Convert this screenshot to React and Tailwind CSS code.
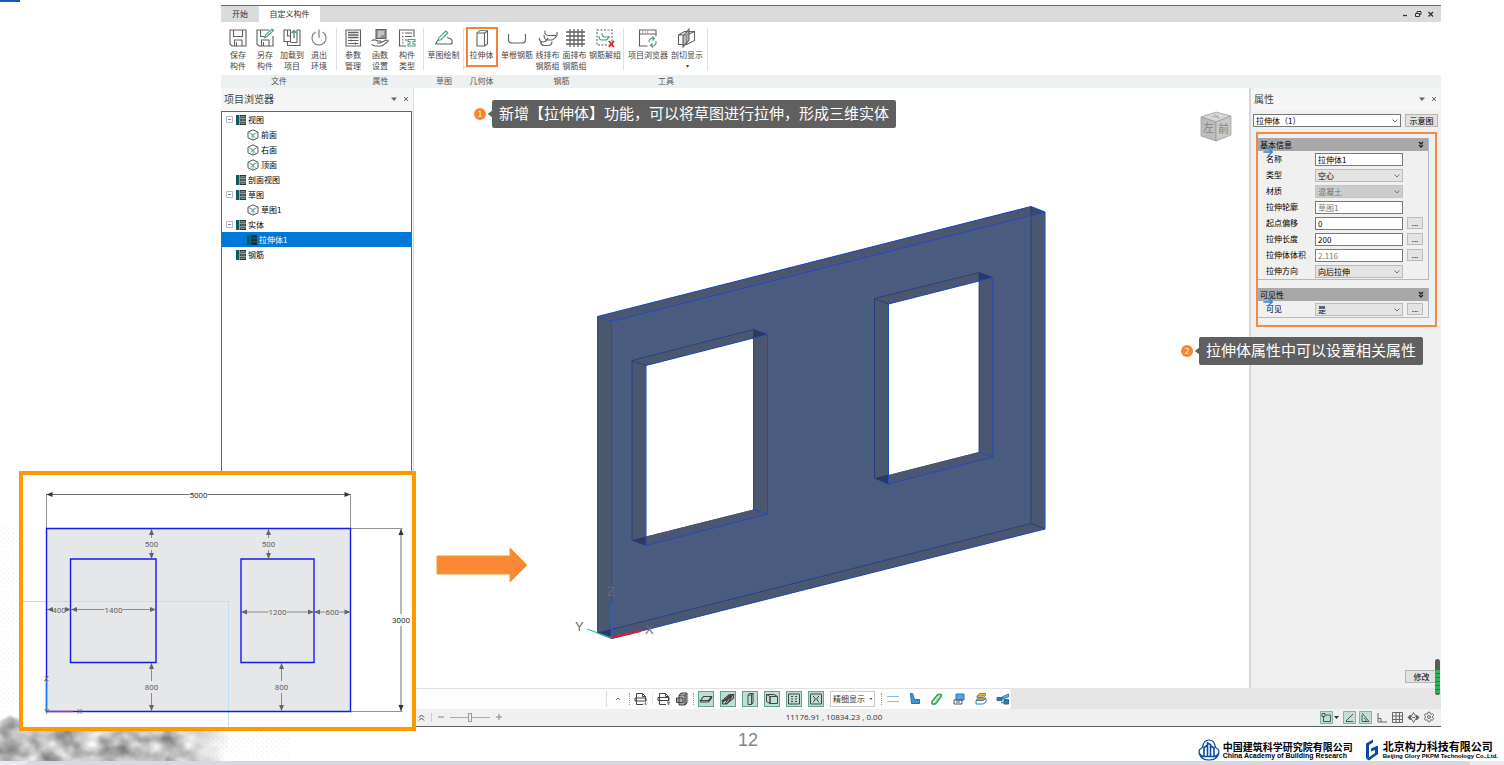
import { ArrowRight, Settings } from "lucide-react";

const fileItems = [
  { icon: "save", lines: ["保存", "构件"] },
  { icon: "saveAs", lines: ["另存", "构件"] },
  { icon: "load", lines: ["加载到", "项目"] },
  { icon: "exit", lines: ["退出", "环境"] },
];

const propItems = [
  { icon: "params", lines: ["参数", "管理"] },
  { icon: "func", lines: ["函数", "设置"] },
  { icon: "types", lines: ["构件", "类型"] },
];

const treeRows = [
  { label: "视图", level: 0, open: true },
  { label: "前面", level: 1, icon: "cube" },
  { label: "右面", level: 1, icon: "cube" },
  { label: "顶面", level: 1, icon: "cube" },
  { label: "剖面视图", level: 0 },
  { label: "草图", level: 0, open: true },
  { label: "草图1", level: 1, icon: "cube" },
  { label: "实体", level: 0, open: true },
  { label: "拉伸体1", level: 1, icon: "list", selected: true },
  { label: "钢筋", level: 0 },
];

const basicFields = [
  { id: "name", label: "名称", value: "拉伸体1" },
  { id: "kind", label: "类型", value: "空心", select: true },
  { id: "material", label: "材质", value: "混凝土", select: true, disabled: true },
  { id: "profile", label: "拉伸轮廓", value: "草图1", disabled: true },
  { id: "offset", label: "起点偏移", value: "0", more: true },
  { id: "length", label: "拉伸长度", value: "200", more: true },
  { id: "volume", label: "拉伸体体积", value: "2.116", disabled: true, more: true },
  { id: "direction", label: "拉伸方向", value: "向后拉伸", select: true },
];

const visibleFields = [{ id: "visible", label: "可见", value: "是", select: true, more: true }];

const G = "#4f9a80";

function RibbonIcon({ name }) {
  return (
    <svg viewBox="0 0 20 20" className="h-5 w-5 shrink-0" fill="none" stroke="#606060" strokeWidth="1.1">
      {name === "save" && <path d="M2 2h16v16H4l-2-2zM5.500 2v6.500h9V2M6.500 18v-6h7.500v6M8.500 14v4" />}
      {name === "saveAs" && (
        <>
          <path d="M14 2H2v14l2 2h14V8M5.500 2v6.500h4M6.500 18v-6h7.500v6M8.500 14v4" />
          <path d="M9.500 9.500l1-2.500 6.500-6 1.500 1.500-6.500 6z" stroke={G} />
        </>
      )}
      {name === "load" && (
        <>
          <path d="M8.500 2H2v11.500h6.500zM5.500 2v6h3" />
          <path d="M18 2v15.500H5.500V13.500M15 4.500v10H8.500M15 4.500V2h3" />
          <path d="M12 10V3M9.500 5L12 2.500 14.500 5" stroke={G} strokeWidth="1.500" />
        </>
      )}
      {name === "exit" && <path d="M10 1.500V10M6.500 4a7 7 0 1 0 7 0" stroke="#777" />}
      {name === "params" && (
        <>
          <path d="M3 2h14.500v16H3z" />
          <path d="M5 4.500h10.500M5 7h10.500M5 9.500h10.500" strokeWidth="1.500" />
          <path d="M5 12.500h10.500M5 15.500h10.500M8 11.500v2M12.500 14.500v2" />
        </>
      )}
      {name === "func" && (
        <>
          <path d="M6 1.500h10v9H6z" fill="#999" />
          <path d="M8 4h6M8 6h6M8 8h3" stroke="#eee" />
          <path d="M12 8l3 3" stroke={G} />
          <path d="M1.500 12.500q3.500-1.500 6 .5h3q1.500 1.500-1 2H7M11 14.500l5.500-2.500q2 0 1.500 1.500L12 18H5l-3.500-1.500" />
        </>
      )}
      {name === "types" && (
        <>
          <path d="M9 18H2.500V2H17v7M5 5h1.500M8 5h7M5 8.500h1.500M8 8.500h7M5 12h1.500M8 12h2M5 15h1.500" />
          <path d="M11 11.500h7v2h-2v2.500h2v2h-7v-2h2v-2.500h-2z" stroke={G} />
        </>
      )}
      {name === "sketch" && (
        <>
          <path d="M4 12l-2.500 4h14.500c3 0 3-4.500 0-5.500l-3-1" />
          <path d="M4 12.500l.8-2.800 7-6.700 2 2-7 6.700z" stroke={G} />
        </>
      )}
      {name === "extrude" && (
        <>
          <path d="M5 5h7.500v13H5zM12.500 5l3-2v13l-3 2" />
          <path d="M5 5l2.500-2.500h8" stroke={G} />
        </>
      )}
      {name === "bar" && <path d="M1.500 6v6q0 3 3 3h11q3 0 3-3V6" />}
      {name === "line" && (
        <>
          <path d="M1 10q1 4 3.500 4 4 0 5.500-4M2.500 14q1 3.500 3.500 3.500h4q4 0 4-4M7 2.500q-1 5 4 5h7" />
          <path d="M6 7q0 5 4 5h3q3 0 6-4.500V4" />
        </>
      )}
      {name === "mesh" && <path d="M5 1v18M9 1v18M13 1v18M17 1v18M1 4h19M1 8h19M1 12h19M1 16h19" strokeWidth="1.300" />}
      {name === "ungroup" && (
        <>
          <path d="M2 2h15v15H2z" strokeDasharray="2 1.500" />
          <path d="M4 8q0 4 3 4h3q3 0 4-4M7 5q0 4 3 4h5" stroke={G} />
          <path d="M14 13l5 6M19 13l-5 6" stroke="#d22" strokeWidth="1.800" />
        </>
      )}
      {name === "browser" && (
        <>
          <path d="M9.500 18H1.500V2H18v6M1.500 6H18M4 4h1M6.500 4h1M9 4h1" />
          <path d="M11 14a3.500 4 0 0 1 5-3.500M18 13a3.500 4 0 0 1-5 4.500M14 8.500l2.500 2-2 2M15 19.500l-2.500-2 2-2" stroke={G} />
        </>
      )}
      {name === "section" && (
        <>
          <path d="M1.500 7l8 0v9.500h-8zM1.500 7l6-3.500h10v9l-8 4M9.500 7l8-3.500" />
          <path d="M6 8l6-7v11l-6 7z" fill="#999" fillOpacity=".7" />
        </>
      )}
    </svg>
  );
}

function RibbonButton({ icon, lines, width = "w-[27px]", active, arrow }) {
  return (
    <button
      type="button"
      className={`flex h-[38px] flex-col items-center text-[8px] leading-[11px] whitespace-nowrap text-[#444] ${width} ${
        active ? "outline-2 -outline-offset-1 outline-[#f5813a]" : ""
      }`}
    >
      <RibbonIcon name={icon} />
      <span className="mt-px">{lines[0]}</span>
      {lines[1] && <span>{lines[1]}</span>}
      {arrow && <span className="text-[6px]">▾</span>}
    </button>
  );
}

function RibbonGroup({ title, width, divider = true, children }) {
  return (
    <section className={`flex shrink-0 flex-col ${width}`}>
      <div className="flex h-[53px] pt-[6px]">
        <div className="flex flex-1 justify-center">{children}</div>
        {divider && <div className="h-[42px] w-px bg-[#e0e0e0]" />}
      </div>
      <h2 className="h-[13px] bg-[#edf1f1] text-center text-[8px] leading-[12px] text-[#555]">{title}</h2>
    </section>
  );
}

function TitleBar() {
  return (
    <header className="flex h-[17px] shrink-0 items-stretch border-t border-[#6b6b6b] bg-[#dadbdc] text-[8px] text-[#333]">
      <button type="button" className="w-[38px]">开始</button>
      <button type="button" className="w-[61px] bg-white">自定义构件</button>
      <div className="ml-auto flex items-center gap-[5px] pr-[6px]">
        <button type="button" aria-label="最小化" className="h-2 w-2">
          <svg viewBox="0 0 8 8" stroke="#333" strokeWidth="1.300"><path d="M2 5.500h4" /></svg>
        </button>
        <button type="button" aria-label="还原" className="h-2 w-2">
          <svg viewBox="0 0 8 8" stroke="#333" fill="none"><path d="M1.500 3.500h4v3h-4zM3 3V1.500h4v3H6" /></svg>
        </button>
        <button type="button" aria-label="关闭" className="h-2 w-2">
          <svg viewBox="0 0 8 8" stroke="#333" strokeWidth="1.300"><path d="M1.500 2l4.500 4.500M6 2L1.500 6.500" /></svg>
        </button>
      </div>
    </header>
  );
}

function Ribbon() {
  return (
    <nav className="flex shrink-0 bg-white">
      <RibbonGroup title="文件" width="w-[116px]">
        {fileItems.map((item) => <RibbonButton key={item.icon} {...item} />)}
      </RibbonGroup>
      <RibbonGroup title="属性" width="w-[87px]">
        {propItems.map((item) => <RibbonButton key={item.icon} {...item} />)}
      </RibbonGroup>
      <RibbonGroup title="草图" width="w-[40px]">
        <RibbonButton icon="sketch" lines={["草图绘制"]} width="w-[36px]" />
      </RibbonGroup>
      <RibbonGroup title="几何体" width="w-[35px]" divider={false}>
        <RibbonButton icon="extrude" lines={["拉伸体"]} width="w-[30px]" active />
      </RibbonGroup>
      <RibbonGroup title="钢筋" width="w-[125px]">
        <RibbonButton icon="bar" lines={["单根钢筋"]} width="w-[34px]" />
        <RibbonButton icon="line" lines={["线排布", "钢筋组"]} />
        <RibbonButton icon="mesh" lines={["面排布", "钢筋组"]} />
        <RibbonButton icon="ungroup" lines={["钢筋解组"]} width="w-[34px]" />
      </RibbonGroup>
      <RibbonGroup title="工具" width="w-[84px]">
        <RibbonButton icon="browser" lines={["项目浏览器"]} width="w-[43px]" />
        <RibbonButton icon="section" lines={["剖切显示"]} width="w-[35px]" arrow />
      </RibbonGroup>
      <div className="mt-auto h-[13px] flex-1 bg-[#edf1f1]" />
    </nav>
  );
}

function PanelHeader({ title }) {
  return (
    <div className="flex h-[23px] items-center bg-[#f5f5f5] px-[3px] pb-[2px] text-[10px] text-[#444]">
      <h2>{title}</h2>
      <button type="button" aria-label="选项" className="ml-auto h-2 w-2">
        <svg viewBox="0 0 8 8" fill="#666"><path d="M1 2.500h6L4 6z" /></svg>
      </button>
      <button type="button" aria-label="关闭面板" className="ml-1 h-2 w-2">
        <svg viewBox="0 0 8 8" stroke="#666"><path d="M2 2l4 4M6 2L2 6" /></svg>
      </button>
    </div>
  );
}

function TreeIcon({ icon }) {
  if (icon === "cube") {
    return (
      <svg viewBox="0 0 12 12" className="h-3 w-3" fill="none" stroke="#444" strokeWidth=".9">
        <path d="M6 .8l5 2.400v5.600L6 11.200 1 8.800V3.200z" />
        <path d="M1 3.200l5 2.300 5-2.300M6 5.500V11M3.500 8.500l5-4M3.500 5l5 3.500" stroke="#4e8d8d" strokeWidth=".7" />
      </svg>
    );
  }
  return (
    <svg viewBox="0 0 10 10" className="h-[10px] w-[10px]">
      <path d="M0 0h3.500v10H0z" fill="#0d5b5b" />
      <path d="M4 0h6v2.800H4zM4 3.600h6v2.800H4zM4 7.200h6V10H4z" fill="#1f2f35" />
      {icon !== "list" && <path d="M4.500 1.400h5M4.500 5h5M4.500 8.600h5" stroke="#8fb5b0" strokeWidth=".8" />}
    </svg>
  );
}

function ProjectTree() {
  return (
    <aside className="flex w-[192px] shrink-0 flex-col bg-[#f5f5f5]">
      <PanelHeader title="项目浏览器" />
      <ul className="mr-[1px] flex-1 border border-[#666] bg-white text-[8px] text-black">
        {treeRows.map((row) => (
          <li key={row.label}>
            <button
              type="button"
              className={`flex h-[15px] w-full items-center gap-[2px] ${row.level ? "pl-[25px]" : "pl-1"} ${
                row.selected ? "bg-[#0078d7] text-white" : ""
              }`}
            >
              {!row.level && (
                <span className="flex w-2">
                  {row.open && (
                    <svg viewBox="0 0 7 7" className="h-[7px] w-[7px]" fill="#fff" stroke="#a0a8b0" strokeWidth=".8">
                      <path d="M.5.5h6v6h-6z" />
                      <path d="M2 3.500h3" stroke="#456fa5" />
                    </svg>
                  )}
                </span>
              )}
              <TreeIcon icon={row.icon} />
              <span className="whitespace-nowrap">{row.label}</span>
            </button>
          </li>
        ))}
      </ul>
    </aside>
  );
}

function Callout({ number, children }) {
  return (
    <div className="flex items-center">
      <span className="flex h-3 w-3 items-center justify-center rounded-full bg-[#f98531] text-[8px] leading-none text-white">
        {number}
      </span>
      <svg viewBox="0 0 6 8" className="ml-[1px] h-2 w-[5px]" fill="#5f5f5f"><path d="M6 0v8L1 4z" /></svg>
      <p className="flex h-[28px] items-center rounded-[2px] bg-[#606060] px-[7px] pb-px text-[15px] whitespace-nowrap text-white">
        {children}
      </p>
    </div>
  );
}

function WallModel() {
  return (
    <svg viewBox="414 88 835 600" className="absolute inset-0 h-full w-full" fill="none">
      <path
        fillRule="evenodd"
        fill="#4a5b80"
        d="M597.500 316.500L1031 206.500 1045 212V529L611.500 638.500 597.500 633zM646 365.500V536.500L753.500 509.500V338zM888.500 304V475L979 452V281z"
      />
      <g fill="#4b5671">
        <path d="M597.500 316.500L1031 206.500V215.500L611.500 321.500V629.500L597.500 633z" />
        <path d="M1031 215.500L1045 212V529L611.500 638.500V629.500L1031 523.500z" />
        <path fillRule="evenodd" d="M632 360.500L753.500 329.500 767.500 334.500V514L646 545.500 632 540zM646 365.500V536.500L753.500 509.500V338z" />
        <path fillRule="evenodd" d="M874.500 298.500L979 272.500 993 277.500V457L888.500 484 874.500 478zM888.500 304V475L979 452V281z" />
      </g>
      <g fill="#2c3862">
        <path d="M753.500 329.500l14 5-14 3.500zM979 272.500l14 5-14 3.500zM632 540l14-3.500v9zM874.500 478l14-3.500v9.500zM597.500 633l14-3.500v9z" />
        <path d="M1031 206.500l14 5.500-14 3.500z" fill="#3c4870" />
      </g>
      <g stroke="#22397e" strokeWidth=".8">
        <path d="M1031 206.500V523.500L597.500 633M1031 523.500l14 5.500" />
        <path d="M632 540V360.500L753.500 329.500V509.500M632 540l14 5.500M632 360.500l14 5M753.500 329.500l14 5" />
        <path d="M874.500 478V298.500L979 272.500V452M874.500 478l14 6M874.500 298.500l14 5.500M979 272.500l14 5" />
      </g>
      <g stroke="#1e4bc4">
        <path d="M597.500 316.500L1031 206.500 1045 212V529L611.500 638.500 597.500 633zM597.500 316.500l14 5L1045 212M611.500 321.500V638.500" />
        <path d="M646 365.500L767.500 334.500V514L646 545.500zM753.500 509.500l14 4.500M888.500 304L993 277.500V457L888.500 484zM979 452l14 5" />
      </g>
      <path d="M611.500 638V602" stroke="#1763e8" strokeWidth="1.500" />
      <path d="M611.500 638L641 631" stroke="#e21b2c" strokeWidth="1.800" />
      <path d="M611.500 638L587 629" stroke="#20c997" strokeWidth="1.300" />
      <g fill="#6a6a6a" className="font-['Liberation_Sans'] text-[13px]">
        <text x="607" y="596">Z</text>
        <text x="575" y="631">Y</text>
        <text x="645" y="634">X</text>
      </g>
    </svg>
  );
}

function ViewCube() {
  return (
    <svg viewBox="0 0 32 32" className="absolute top-[23px] right-[17px] h-8 w-8" stroke="#999" strokeWidth=".7">
      <path d="M1 6L16 1l15 4-15 6z" fill="#d6d6d6" />
      <path d="M1 6l15 5v19L1 25z" fill="#bcbcbc" />
      <path d="M16 11l15-6v19l-15 6z" fill="#c9c9c9" />
      <path d="M12 5l7 1M15 3l4 5" fill="none" />
      <g fill="#858585" stroke="none" className="text-[11px]">
        <text x="3" y="21">左</text>
        <text x="18" y="22">前</text>
      </g>
    </svg>
  );
}

function Field({ id, label, value, select, disabled, more }) {
  const base = "h-[13px] w-[88px] border px-[2px] text-[8px] leading-[11px] rounded-none";
  return (
    <div className="flex h-4 items-center">
      <label htmlFor={id} className="w-[49px] shrink-0 whitespace-nowrap">{label}</label>
      {select ? (
        <span className="relative flex">
          <select
            id={id}
            disabled={disabled}
            className={`${base} appearance-none ${
              disabled ? "border-[#c4c4c4] bg-[#cccccc] text-[#777] opacity-100" : "border-[#bbb] bg-[#e3e3e3] text-black"
            }`}
          >
            <option>{value}</option>
          </select>
          <Chevron />
        </span>
      ) : (
        <input
          id={id}
          defaultValue={value}
          disabled={disabled}
          className={`${base} border-[#7a7a7a] bg-white ${disabled ? "text-[#777]" : "text-black"}`}
        />
      )}
      {more && (
        <button
          type="button"
          aria-label={`${label}更多`}
          className="ml-1 flex h-3 w-4 items-center justify-center border border-[#bbb] bg-[#e3e3e3] text-[8px] leading-none"
        >
          ...
        </button>
      )}
    </div>
  );
}

function Chevron() {
  return (
    <svg viewBox="0 0 8 8" className="pointer-events-none absolute top-[3px] right-[2px] h-2 w-2" fill="none" stroke="#777">
      <path d="M1.500 2.500L4 5l2.500-2.500" />
    </svg>
  );
}

function PropertyGroup({ title, fields }) {
  return (
    <section className="relative mr-[6px] border-r border-b border-[#a9bccb]">
      <h3 className="flex h-[13px] items-center justify-between bg-[#a8a8a8] px-[2px] text-[8px] text-black">
        {title}
        <svg viewBox="0 0 8 8" className="mr-[1px] h-2 w-2" fill="none" stroke="#222" strokeWidth="1.300"><path d="M2 1l2 2 2-2M2 4l2 2 2-2" /></svg>
      </h3>
      <ArrowRight className="absolute top-[7px] left-[3px] h-[14px] w-[14px] text-[#2488dd]" strokeWidth={2.5} />
      <div className="pl-[8px]">
        {fields.map((field) => <Field key={field.id} {...field} />)}
      </div>
    </section>
  );
}

function PropertiesPanel() {
  return (
    <aside className="relative flex w-[192px] shrink-0 flex-col border-l-2 border-[#d8d8d8] bg-[#f0f0f0] text-[8px] text-black">
      <PanelHeader title="属性" />
      <div className="mt-[3px] mr-[3px] ml-[2px] flex gap-1">
        <span className="relative flex flex-1">
          <select aria-label="当前构件" className="h-[13px] w-full appearance-none border border-[#777] bg-white px-[2px] leading-[11px]">
            <option>拉伸体（1）</option>
          </select>
          <Chevron />
        </span>
        <button type="button" className="h-[13px] w-[33px] border border-[#b5b5b5] bg-[#e1e1e1] leading-[11px]">示意图</button>
      </div>
      <div className="mt-[5px] mr-[4px] ml-[5px] flex h-[195px] flex-col gap-[8px] border-2 border-[#f08a45] pt-[4px]">
        <PropertyGroup title="基本信息" fields={basicFields} />
        <PropertyGroup title="可见性" fields={visibleFields} />
      </div>
      <button type="button" className="mt-auto mr-[3px] mb-[5px] h-[13px] w-[33px] self-end border border-[#b5b5b5] bg-[#e1e1e1] leading-[11px]">
        修改
      </button>
      {/* level meter hanging over the lower corner */}
      <div className="absolute right-[1px] -bottom-[7px] flex h-[36px] w-[5px] flex-col overflow-hidden rounded-full bg-[#5b5b5b]">
        <div className="mt-[11px] flex flex-1 flex-col gap-px">
          {[1, 2, 3, 4, 5, 6].map((n) => <span key={n} className="h-[3px] bg-[#2fb457]" />)}
        </div>
      </div>
    </aside>
  );
}

function Dots() {
  return <span className="h-3 w-px shrink-0 border-l border-dotted border-[#999]" />;
}

function ToolIcon({ name }) {
  return (
    <svg viewBox="0 0 14 14" className="h-[14px] w-[14px] shrink-0" fill="none" stroke="#444" strokeWidth="1">
      {name === "docA" && (
        <>
          <path d="M9 12.500H2.500v-11h6l3 3V9M8.500 1.500v3h3M1 6h11v3H1z" />
          <path d="M11.500 9.500v3M10 11.500l1.500 1.500 1.500-1.500" stroke={G} />
        </>
      )}
      {name === "docB" && (
        <>
          <path d="M9 12.500H2.500v-11h6l3 3V9M8.500 1.500v3h3M1 5.500h11v3H1z" />
          <path d="M11.500 9.500v3.500M10 10.500h3" stroke={G} strokeWidth="1.500" />
        </>
      )}
      {name === "docC" && <path d="M4 3l2-2h6v10l-2 2H4zM10 3v10M4 3h6l2-2M1.500 6H8v4.500H1.500z" fill="#aaa" />}
      {name === "slab" && <path d="M1.500 8.500l3-4h8l-3 4zM1.500 8.500v1.500h8l3-4V4.500" strokeWidth="1.200" />}
      {name === "hatch" && <path d="M1.500 8.500l7-6h4l-7 6zM1.500 8.500v3.500h4l7-6V2.500M4 12l5-8M6 12l5-8M2 10l8-7" strokeWidth="1.200" />}
      {name === "column" && <path d="M5 3h3.500v9.500H5zM5 3l1.500-1.500H10V11l-1.500 1.500M8.500 3L10 1.500" />}
      {name === "wall" && <path d="M1.500 2.500l3.500 2v7l-3.500-2zM1.500 2.500h7.500l3.500 2v7H5v-7h7.500" />}
      {name === "grid" && <path d="M1.500 2h11v10h-11zM4 4.500h2M8 4.500h2M4 7h2M8 7h2M4 9.500h2M8 9.500h2" />}
      {name === "frame" && <path d="M1.500 2h11v10h-11zM4 4l2 2M10 4L8 6M4 10l2-2M10 10L8 8M5 7h4" />}
      {name === "lines" && <path d="M1 4.500h12M1 9.500h12" stroke="#8dbbe5" strokeWidth="1.200" />}
      {name === "angle" && <path d="M2.500 1.500h2l2 6h5v4h-8z" fill="#3b93de" stroke="#1e73bd" />}
      {name === "clip" && (
        <>
          <path d="M2.500 9l5-6c3-1.500 5 0 3 2.500l-5 6c-2 1.500-5 0-3-2.500z" stroke="#38a65f" strokeWidth="1.800" />
          <path d="M5 9.500l4.500-5.500" stroke="#7ca" />
        </>
      )}
      {name === "screen" && (
        <>
          <path d="M4 2h8v6H4z" fill="#58a4e4" stroke="#2376be" />
          <path d="M2 8h8v4H2zM4 10h4" stroke="#555" />
        </>
      )}
      {name === "stack" && (
        <>
          <path d="M3 4l3-2.500h6L9 4zM2 8l3-2h7L9 8z" fill="#f2bd4f" stroke="#aa7c25" />
          <path d="M2 8.500V12h7l3-2V6.500L9 8.500zM3 4v1.500h6L12 3" stroke="#3681c2" />
        </>
      )}
      {name === "network" && (
        <>
          <path d="M6 5l6.500-3v3L6 7z" fill="#6daddc" stroke="#327dba" />
          <path d="M1 5.500h5v3H1zM8 7.500h4.500V12H8z" fill="#377bba" stroke="#2a659b" />
          <path d="M5 10.500h3" stroke="#2a9a63" strokeWidth="1.500" />
        </>
      )}
    </svg>
  );
}

function ViewToolbar() {
  return (
    <div className="flex h-[21px] shrink-0 border-t border-[#e2e2e2] bg-[#e5e5e5]">
      <div className="flex w-[790px] items-center justify-end gap-1 rounded-r-[3px] bg-[#fdfdfd] pr-px text-[8px]">
        <span className="h-4 w-px bg-[#ddd]" />
        <button type="button" aria-label="收起" className="h-[14px] w-[14px]">
          <svg viewBox="0 0 14 14" fill="none" stroke="#777"><path d="M5 8l2-2 2 2" /></svg>
        </button>
        <Dots />
        <button type="button" aria-label="导出"><ToolIcon name="docA" /></button>
        <span className="h-3 w-px bg-[#e5e5e5]" />
        <button type="button" aria-label="导入"><ToolIcon name="docB" /></button>
        <button type="button" aria-label="打印"><ToolIcon name="docC" /></button>
        <Dots />
        <div className="flex gap-[6px]">
          {["slab", "hatch", "column", "wall", "grid", "frame"].map((name) => (
            <button
              key={name}
              type="button"
              aria-label={name}
              className="flex h-4 w-4 items-center justify-center border border-[#5fa592] bg-[#bfded4]"
            >
              <ToolIcon name={name} />
            </button>
          ))}
        </div>
        <span className="relative mr-[2px] ml-[2px] flex">
          <select aria-label="显示精度" className="h-4 w-[45px] appearance-none border border-[#ccc] bg-white px-[2px] text-[#333]">
            <option>精细显示</option>
          </select>
          <svg viewBox="0 0 8 8" className="pointer-events-none absolute top-1 right-0 h-2 w-2" fill="#555"><path d="M2.500 3h3L4 5z" /></svg>
        </span>
        <Dots />
        <div className="flex gap-2">
          {["lines", "angle", "clip", "screen", "stack", "network"].map((name) => (
            <button key={name} type="button" aria-label={name}><ToolIcon name={name} /></button>
          ))}
        </div>
      </div>
    </div>
  );
}

function StatusBar() {
  return (
    <footer className="grid h-[18px] shrink-0 grid-cols-3 items-center border-b border-[#555f66] bg-[#f0f0f0] pb-px text-[8px] text-[#333]">
      <div className="flex items-center gap-[5px] pl-[196px]">
        <svg viewBox="0 0 9 9" className="h-[9px] w-[9px]" fill="none" stroke="#444"><path d="M2 4.500L4.500 2 7 4.500M2 7.500L4.500 5 7 7.500" /></svg>
        <span className="h-[9px] w-px bg-[#ccc]" />
        <button type="button" aria-label="缩小" className="h-2 w-2">
          <svg viewBox="0 0 8 8" stroke="#888"><path d="M1 4h6" /></svg>
        </button>
        <input
          type="range"
          aria-label="缩放"
          className="h-[10px] w-[40px] appearance-none bg-[linear-gradient(#aaa,#aaa)] bg-[length:100%_1px] bg-center bg-no-repeat [&::-webkit-slider-thumb]:h-[9px] [&::-webkit-slider-thumb]:w-[4px] [&::-webkit-slider-thumb]:appearance-none [&::-webkit-slider-thumb]:border [&::-webkit-slider-thumb]:border-[#999] [&::-webkit-slider-thumb]:bg-[#eee]"
        />
        <button type="button" aria-label="放大" className="h-2 w-2">
          <svg viewBox="0 0 8 8" stroke="#888"><path d="M1 4h6M4 1v6" /></svg>
        </button>
      </div>
      <p className="pl-[6px] text-center font-['Open_Sans']">11176.91 , 10834.23 , 0.00</p>
      <div className="flex items-center justify-end gap-[3px] pr-[5px]">
        <button type="button" aria-label="捕捉" className="flex h-[13px] w-[20px] items-center">
          <svg viewBox="0 0 20 13" fill="none" stroke="#555">
            <path d="M.5.5h12v12H.5z" fill="#bfded4" stroke="#7cb7a6" />
            <path d="M2 2.500h3v3H2zM5 4h5.500v6.500H3.500v-5" />
            <path d="M14 5h5l-2.500 3z" fill="#333" stroke="none" />
          </svg>
        </button>
        {["M3 10L10 3M3 10.500h7", "M3 2l7 8.500M3 4v6.500h7M5 7q2 1 2 3.500"].map((d) => (
          <button key={d} type="button" aria-label="追踪" className="h-[13px] w-[13px]">
            <svg viewBox="0 0 13 13" fill="none" stroke="#555">
              <path d="M.5.5h12v12H.5z" fill="#bfded4" stroke="#7cb7a6" />
              <path d={d} />
            </svg>
          </button>
        ))}
        <button type="button" aria-label="正交" className="h-[13px] w-[13px]">
          <svg viewBox="0 0 13 13" fill="none" stroke="#666"><path d="M3 2v9h9M3 7.500h3V11" /></svg>
        </button>
        <button type="button" aria-label="栅格" className="h-[13px] w-[13px]">
          <svg viewBox="0 0 13 13" fill="none" stroke="#666"><path d="M1.500 1.500h10v10h-10zM5 1.500v10M8.500 1.500v10M1.500 5h10M1.500 8.500h10" /></svg>
        </button>
        <button type="button" aria-label="视图导航" className="h-[13px] w-[13px]">
          <svg viewBox="0 0 13 13" fill="none" stroke="#666">
            <path d="M6.500 1.500L9.500 6.500 6.500 11.500 3.500 6.500zM5 6.500h3" />
            <path d="M3.500 4L1 6.500 3.500 9zM9.500 4L12 6.500 9.500 9z" fill="#555" />
          </svg>
        </button>
        <button type="button" aria-label="设置" className="flex w-[13px] justify-center">
          <Settings className="h-[12px] w-[12px] text-[#666]" strokeWidth={2} />
        </button>
      </div>
    </footer>
  );
}

// axis-aligned dimension line with arrow heads on both ends
function Dim({ x1, y1, x2, y2, text, color = "#666" }) {
  const horizontal = y1 === y2;
  const cx = (x1 + x2) / 2;
  const cy = (y1 + y2) / 2;
  const half = horizontal ? text.length * 2 + 1 : 6;
  return (
    <g stroke={color} fill={color} strokeWidth=".7">
      {horizontal ? (
        <>
          <path d={`M${x1} ${y1}H${cx - half}M${cx + half} ${y1}H${x2}`} />
          <path d={`M${x1} ${y1}l6-2.500v5zM${x2} ${y1}l-6-2.500v5z`} stroke="none" />
        </>
      ) : (
        <>
          <path d={`M${x1} ${y1}V${cy - half}M${x1} ${cy + half}V${y2}`} />
          <path d={`M${x1} ${y1}l-2.500 6h5zM${x1} ${y2}l-2.500-6h5z`} stroke="none" />
        </>
      )}
      <text x={cx} y={cy + 3} textAnchor="middle" stroke="none" className="font-['Roboto'] text-[8px]">
        {text}
      </text>
    </g>
  );
}

function SketchPreview() {
  return (
    <figure className="absolute bottom-[34px] left-[19px] h-[260px] w-[397px] border-4 border-[#ff9900] bg-white">
      <svg viewBox="23 475 389 252" className="h-full w-full" fill="none">
        <path d="M46.500 528.500h304v183h-304z" fill="#e5e7e9" />
        <path d="M23 601.500h205.500V727" stroke="#bfe0f2" />
        <path d="M46.500 494v34M350.500 494v34M350.500 528.500h52M350.500 711.500h52" stroke="#777" strokeWidth=".8" />
        <path
          d="M46.500 528.500h304v183h-304zM70.500 559h85.500v103.500h-85.500zM241 559h73v103.500h-73z"
          stroke="#1818f5"
          strokeWidth="1.400"
        />
        <path d="M46.500 711V680" stroke="#1a7cf5" strokeWidth="1.300" />
        <path d="M46.500 711.500H73" stroke="#e0264a" strokeWidth="1.300" />
        <Dim x1={46.5} y1={494.5} x2={350.5} y2={494.5} text="5000" color="#333" />
        <Dim x1={401} y1={529} x2={401} y2={711} text="3000" color="#333" />
        <Dim x1={151.5} y1={529} x2={151.5} y2={559} text="500" />
        <Dim x1={268.5} y1={529} x2={268.5} y2={559} text="500" />
        <Dim x1={47} y1={609.5} x2={71} y2={609.5} text="400" />
        <Dim x1={71} y1={609.5} x2={156} y2={609.5} text="1400" />
        <Dim x1={241} y1={612} x2={314} y2={612} text="1200" />
        <Dim x1={314} y1={612} x2={350.5} y2={612} text="600" />
        <Dim x1={151.5} y1={663} x2={151.5} y2={711} text="800" />
        <Dim x1={281.5} y1={663} x2={281.5} y2={711} text="800" />
        <g fill="#666" className="font-['Liberation_Sans'] text-[8px]">
          <text x="44" y="681">Z</text>
          <text x="77" y="714">X</text>
          <text x="44" y="714">Y</text>
        </g>
      </svg>
    </figure>
  );
}

function Backdrop() {
  return (
    <svg className="absolute bottom-0 left-0 h-[240px] w-[300px]" viewBox="0 525 300 240">
      <defs>
        <pattern id="dots" width="5" height="5" patternUnits="userSpaceOnUse">
          <path d="M1 1h1v1H1zM3 3h1v1H3z" fill="#ededed" />
        </pattern>
        <linearGradient id="fade" x1="0" x2="1">
          <stop offset=".75" stopColor="#fff" />
          <stop offset="1" stopColor="#000" />
        </linearGradient>
        <mask id="fadeMask">
          <path d="M-10 726l20-10 10 4 30 8h180v50H-10z" fill="url(#fade)" />
        </mask>
        <filter id="grain" x="0" y="0" width="1" height="1" colorInterpolationFilters="sRGB">
          <feTurbulence type="fractalNoise" baseFrequency=".05 .07" numOctaves="5" seed="7" />
          <feColorMatrix values=".8 0 0 0 .33 .8 0 0 0 .33 .8 0 0 0 .33 0 0 0 0 1" />
        </filter>
        <filter id="soft"><feGaussianBlur stdDeviation="1" /></filter>
      </defs>
      <path d="M0 525h290v236H0z" fill="url(#dots)" />
      <g filter="url(#soft)">
        <g mask="url(#fadeMask)">
          <path d="M-10 705h250v65H-10z" filter="url(#grain)" />
        </g>
      </g>
    </svg>
  );
}

function Credits() {
  return (
    <div className="flex items-center gap-3 text-black">
      <div className="flex items-center gap-[3px]">
        <svg viewBox="0 0 22 22" className="h-[22px] w-[22px]" fill="none" stroke="#0b4a9c" strokeWidth="1.200">
          <path d="M5 17.500Q1 15 1 12.500q0-2.500 3.500-4Q5.500 1 11 1t6.500 7.500q3.500 1.500 3.500 4 0 2.500-4 5" />
          <path d="M1 14q2 7 10 7t10-7" />
          <path d="M6 17V8.500l3-2M9.500 17V4l3 1.500V17M13 7l3 2v8M3 17.500h16" strokeWidth="1.600" />
        </svg>
        <div>
          <p className="text-[10px] leading-[11px] font-bold whitespace-nowrap">中国建筑科学研究院有限公司</p>
          <p className="font-['Liberation_Sans'] text-[7px] leading-[8px] font-bold whitespace-nowrap">
            China Academy of Building Research
          </p>
        </div>
      </div>
      <div className="flex items-center gap-1">
        <svg viewBox="0 0 14 22" className="h-[22px] w-[14px]" fill="#0d49a0">
          <path d="M1 4.500L8 .5v3L4 6v12L1 20zM6 9.500l7-3v8.500L4 21.500 1.500 20 10 14v-3l-4 1.500z" />
        </svg>
        <div>
          <p className="text-[11px] leading-[11px] font-bold whitespace-nowrap">北京构力科技有限公司</p>
          <p className="font-['Liberation_Sans'] text-[6px] leading-[8px] font-bold whitespace-nowrap">
            Beijing Glory PKPM Technology Co.,Ltd.
          </p>
        </div>
      </div>
    </div>
  );
}

export default function App() {
  return (
    <div className="relative flex min-h-screen flex-col overflow-hidden bg-white font-['Noto_Sans_CJK_SC',sans-serif]">
      <div className="absolute top-0 left-0 h-[2px] w-5 bg-[#1558b0]" />
      <Backdrop />
      <main className="relative mt-[5px] mr-[63px] ml-[221px] flex flex-1 flex-col">
        <TitleBar />
        <Ribbon />
        <div className="flex flex-1">
          <ProjectTree />
          <div className="relative flex-1 overflow-hidden border-l border-[#ddd] bg-white">
            <WallModel />
            <ViewCube />
            <div className="absolute top-[12px] left-[60px]">
              <Callout number="1">新增【拉伸体】功能，可以将草图进行拉伸，形成三维实体</Callout>
            </div>
            <svg viewBox="0 0 92 36" className="absolute top-[459px] left-[22px] h-9 w-[92px]">
              <path d="M1 9h73V1l17 17-17 17v-8H1z" fill="#fa8836" stroke="#eba02c" />
            </svg>
          </div>
          <PropertiesPanel />
        </div>
        <ViewToolbar />
        <StatusBar />
        <div className="absolute top-[332px] right-[18px]">
          <Callout number="2">拉伸体属性中可以设置相关属性</Callout>
        </div>
      </main>
      <SketchPreview />
      <div className="relative grid h-[34px] grid-cols-[1fr_auto_1fr] items-start">
        <p className="col-start-2 pr-2 font-['Liberation_Sans'] text-[18px] leading-[26px] text-[#858585]">12</p>
        <div className="flex justify-end pt-[12px] pr-[6px]"><Credits /></div>
      </div>
      <div className="relative h-[4px] bg-[#e9eaf0] pr-[34px] pl-[26px]">
        <div className="h-full rounded-t-full bg-[#d6d9e3]" />
      </div>
    </div>
  );
}
